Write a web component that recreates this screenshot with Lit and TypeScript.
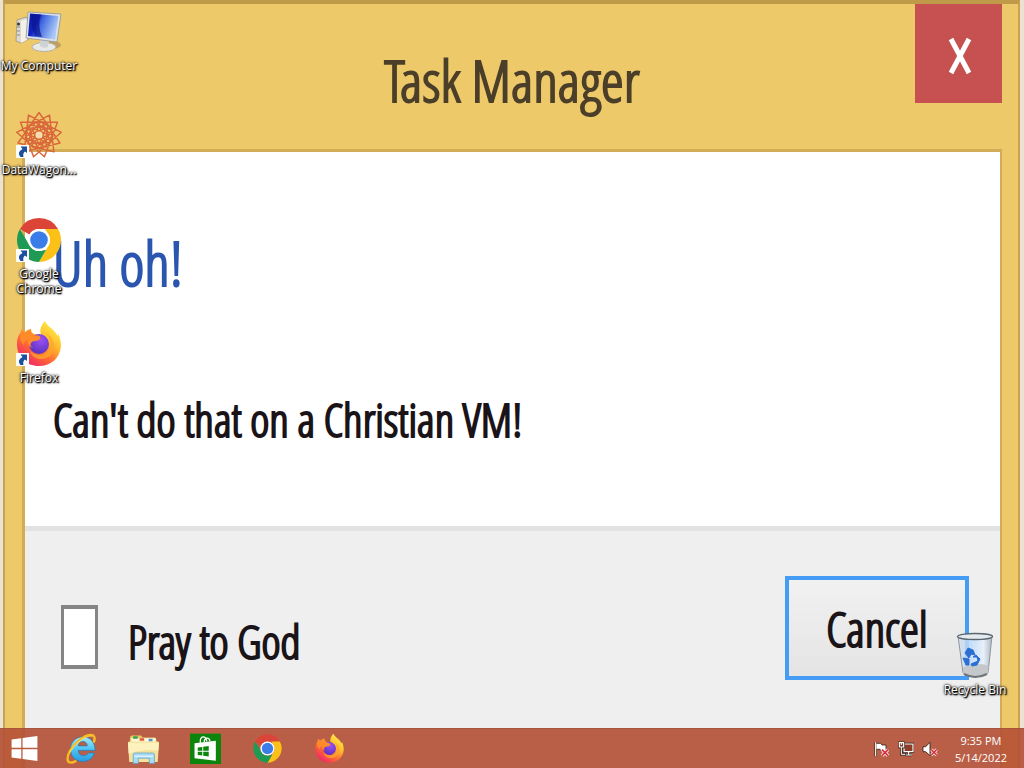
import { LitElement, html, svg, css } from "lit";
import { customElement, property } from "lit/decorators.js";

const starPoints = (n: number, step: number, r: number, turn = 0) =>
  Array.from({ length: n + 1 }, (_, i) => {
    const a = (i * step * 2 * Math.PI) / n - Math.PI / 2 + turn;
    return `${(24 + r * Math.cos(a)).toFixed(1)},${(23 + r * Math.sin(a)).toFixed(1)}`;
  }).join(" ");

const shapes: Record<string, unknown> = {
  computer: svg`
    <defs>
      <linearGradient id="scr" x1="0" y1="0" x2="1" y2="0.35">
        <stop offset="0" stop-color="#0a1a9c"/><stop offset="0.35" stop-color="#1224c4"/>
        <stop offset="0.5" stop-color="#3f66e0"/><stop offset="1" stop-color="#a9c8f6"/>
      </linearGradient>
    </defs>
    <path d="M2 12 L11 9 L14 13 V31 L6 35 L1 33 Z" fill="#dcdad2" stroke="#8f8c80" stroke-width="0.7"/>
    <path d="M6 13 L12 11 V32 L6 35 Z" fill="#f3f1ea"/>
    <path d="M2 19 H5 M2 23 H5 M2 27 H5" stroke="#8b8b80" stroke-width="1"/>
    <circle cx="3.5" cy="16" r="1.5" fill="#303a34"/>
    <ellipse cx="37" cy="37" rx="9" ry="4" fill="#8b7442" opacity="0.45"/>
    <ellipse cx="29" cy="39" rx="12" ry="4.5" fill="#e9e9e6" stroke="#a3a5a4" stroke-width="0.8"/>
    <path d="M25 31 L34 33 L33 39 Q29 41 25 38 Z" fill="#cfd3d6"/>
    <path d="M13 4 L46 6 L42 34 L11 30 Z" fill="#dde1e6" stroke="#8d949c" stroke-width="0.8"/>
    <path d="M15 5.500 L43.500 8 L40 31.500 L13 28 Z" fill="url(#scr)"/>
    <path d="M17 6 L26 6.500 Q22 16 27 29 L20 28 Q15 16 17 6Z" fill="#0a1590" opacity="0.7"/>`,
  wagon: svg`
    <g fill="none" stroke="#d9683c" stroke-linejoin="round">
      <polygon points=${starPoints(13, 4, 22.5)} stroke-width="1.5"/>
      <polygon points=${starPoints(13, 4, 14, 0.2)} stroke-width="1.4"/>
      <polygon points=${starPoints(8, 3, 10)} stroke-width="1.4"/>
    </g>
    <circle cx="24" cy="23" r="3.500" fill="#f6dcae"/>`,
  chrome: svg`
    <path d="M24 2 A22 22 0 0 1 43.050 13 H24 A11 11 0 0 0 14.500 18.500 L4.950 13 A22 22 0 0 1 24 2Z" fill="#dc4437"/>
    <path d="M43.050 13 A22 22 0 0 1 24 46 L33.500 29.500 A11 11 0 0 0 33.500 18.500 L30 13Z" fill="#fbc116"/>
    <path d="M24 46 A22 22 0 0 1 4.950 13 L14.500 29.500 A11 11 0 0 0 28 34.300 L31 34Z" fill="#1f9a55"/>
    <circle cx="24" cy="24" r="11" fill="#fff"/>
    <circle cx="24" cy="24" r="8.800" fill="#3b7de8"/>`,
  firefox: svg`
    <defs>
      <linearGradient id="ffb" x1="0.85" y1="0.05" x2="0.2" y2="0.95">
        <stop offset="0" stop-color="#fff04a"/><stop offset="0.35" stop-color="#ffbd2e"/>
        <stop offset="0.65" stop-color="#ff6a33"/><stop offset="1" stop-color="#f0246a"/>
      </linearGradient>
      <radialGradient id="ffg" cx="0.6" cy="0.3" r="0.8">
        <stop offset="0" stop-color="#9a4ff5"/><stop offset="1" stop-color="#5330b8"/>
      </radialGradient>
    </defs>
    <path d="M30 1 C32 6 37 8 40 12 C41 13 42 15 42.500 16 L43.500 14 C46 20 46 24 46 26 C45 39 35 46 24 46 C11 46 2 37 2 24 C2 18 4 14 6 12 L6 9 L10 12 C12 10 14 9 16 9 C16 11 17 13 19 14 L26 15 C24 9 27 4 30 1Z" fill="url(#ffb)"/>
    <circle cx="24" cy="24" r="10" fill="url(#ffg)"/>
    <path d="M6 12 L10 13 C12 11 14 10 16 9 C15 13 18 15 21 15.500 C25 15 26 17 25 19 C22 22 18 20 16 23 C15 25 16 27 18 28 C14 27 12 23 13 19 C11 20 9 22 9 25 C5 22 4 16 6 12Z" fill="#ff8a2a"/>
    <path d="M30 13 C36 17 37 26 33 31 C29 36 20 36 15 31 C17 40 30 42 37 34 C42 27 39 17 30 13Z" fill="#ffa52b" opacity="0.75"/>`,
  bin: svg`
    <defs>
      <linearGradient id="bing" x1="0" y1="0" x2="1" y2="0">
        <stop offset="0" stop-color="#d7dfe6" stop-opacity="0.8"/><stop offset="0.35" stop-color="#bdd9fb" stop-opacity="0.85"/>
        <stop offset="0.75" stop-color="#e6f0fb" stop-opacity="0.9"/><stop offset="1" stop-color="#aab4bc" stop-opacity="0.95"/>
      </linearGradient>
    </defs>
    <path d="M7 4 H41 L37 41 Q24 49 12 41 Z" fill="url(#bing)" stroke="#8c969e" stroke-width="1"/>
    <path d="M12 36 Q16 31 22 34 Q29 30 37.500 34 L37 41 Q24 49 12 41Z" fill="#c4c8cb"/>
    <path d="M13 42 Q24 48 36 42" fill="none" stroke="#6e757a" stroke-width="2"/>
    <ellipse cx="24" cy="4.500" rx="17.500" ry="3" fill="#e3eaf0" stroke="#5d676f" stroke-width="1.300"/>
    <path d="M14 21 L17 16 L22 18 L24 23 L20 22 L18 26Z M12 26 L18 27 L18 33 L15 33Z M20 32 L27 29 L26 25 L22 25 L25 23 L29 27 L26 33 L21 34Z" fill="#2b6fd2" stroke="#2b6fd2" stroke-width="1"/>`,
  start: svg`
    <path d="M4 10 L19 8 V23 H4Z M21 7.700 L44 4.500 V23 H21Z M4 25 H19 V40 L4 38Z M21 25 H44 V43.500 L21 40.300Z" fill="#fff"/>`,
  ie: svg`
    <defs>
      <linearGradient id="ieg" x1="0" y1="0" x2="0" y2="1">
        <stop offset="0" stop-color="#a4e8fc"/><stop offset="0.5" stop-color="#4fc4f2"/><stop offset="1" stop-color="#2a9be0"/>
      </linearGradient>
    </defs>
    <path d="M26 6 C38 6 45 14 45 27 H19 C19 32 22 35 27 35 C31 35 33 33 35 31 H44 C41 40 35 44 26 44 C14 44 7 36 7 25 C7 14 15 6 26 6Z M19 20 H33 C33 16 30 13 26 13 C22 13 19 16 19 20Z" fill="url(#ieg)" fill-rule="evenodd" stroke="#1b7ab8" stroke-width="1"/>
    <path d="M43 15 C46 7 44 2 37 3 C28 4 13 15 6 28 C1 37 1 45 7 46 C10 46 13 45 16 43" fill="none" stroke="#f6bd1d" stroke-width="3.600"/>
    <path d="M41 6 C36 1 16 13 6 30" fill="none" stroke="#ffe578" stroke-width="1.200"/>`,
  explorer: svg`
    <path d="M3 8 Q3 4 6 4 H20 L23 7 H42 L44 10 V19 H3Z" fill="#e6c76c"/>
    <path d="M5 8 H43 V14 H5Z" fill="#fff7d6"/>
    <path d="M8 5 H15 V9 H8Z" fill="#3aa54a"/><path d="M18 8 H25 V12 H18Z" fill="#e65a3b"/><path d="M32 9 H38 V13 H32Z" fill="#4a93d8"/>
    <path d="M0 15 Q0 13 2 13 H46 Q48 13 48 15 L46 45 H2Z" fill="#f5e29a"/>
    <path d="M0 15 H48 L47 27 Q24 24 1 32Z" fill="#fdf2bd"/>
    <path d="M8 47 V34 Q8 31 11 31 H38 Q41 31 41 34 V47 H33 V39 H16 V47Z" fill="#a9daf3" stroke="#5ea6cf" stroke-width="1.200"/>
    <path d="M10 36 H39" stroke="#e3f5fd" stroke-width="2"/>`,
  store: svg`
    <path d="M0 1 H48 V48 H0Z" fill="#0b850b"/>
    <path d="M7 16 L40 12 V43 L7 39Z" fill="#fff"/>
    <path d="M16 15 C15 4 25 3 26 13 M22 14 C22 7 30 5 31 13" fill="none" stroke="#fff" stroke-width="2"/>
    <path d="M12 22.500 L19 21.500 V27.500 H12Z M20.500 21.200 L29 20 V27.500 H20.500Z M12 29 H19 V35 L12 34Z M20.500 29 H29 V36.500 L20.500 35.300Z" fill="#0b850b"/>`,
  flag: svg`
    <path d="M5 4 V46" stroke="#2a1a12" stroke-width="7"/>
    <path d="M6 7 H20 L24 12 H36 V29 H22 L18 25 H6Z" fill="#fff" stroke="#3a2218" stroke-width="2.500"/>
    <path d="M5 4 V46" stroke="#fff" stroke-width="3.500"/>
    <path d="M24 26 L42 44 M42 26 L24 44" stroke="#fff" stroke-width="10"/>
    <path d="M24 26 L42 44 M42 26 L24 44" stroke="#d8303c" stroke-width="5.500"/>`,
  network: svg`
    <path d="M18 9 H45 V32 H18Z M22 42 H42 M32 32 V42" fill="none" stroke="#2a1a12" stroke-width="8"/>
    <path d="M18 9 H45 V32 H18Z" fill="#8c3c28" stroke="#fff" stroke-width="3.500"/>
    <path d="M22 42 H42 M32 32 V42" stroke="#fff" stroke-width="3.500"/>
    <path d="M4 5 H17 V18 H4Z M10 18 V40 H24" fill="none" stroke="#2a1a12" stroke-width="7"/>
    <path d="M4 5 H17 V18 H4Z" fill="#8c3c28" stroke="#fff" stroke-width="3.500"/>
    <path d="M10 5 V12 M10 18 V40 H22" fill="none" stroke="#fff" stroke-width="3"/>`,
  sound: svg`
    <path d="M3 17 H11 L24 4 V44 L11 32 H3Z" fill="#fff" stroke="#2a1a12" stroke-width="2.500"/>
    <path d="M28 26 L44 42 M44 26 L28 42" stroke="#fff" stroke-width="9"/>
    <path d="M28 26 L44 42 M44 26 L28 42" stroke="#d8303c" stroke-width="5"/>`,
};

const icon = (name: string, cls: string) =>
  html`<svg class=${cls} viewBox="0 0 48 48" aria-hidden="true">${shapes[name]}</svg>`;

@customElement("desktop-icon")
export class DesktopIcon extends LitElement {
  @property() icon = "";
  @property() label = "";
  @property({ type: Boolean }) shortcut = false;

  static styles = css`
    :host { display: block; height: 104px; width: 78px; }
    .item {
      display: flex; flex-direction: column; align-items: center; gap: 2px;
      width: 100%; padding: 8px 0 0; border: 0; background: none; color: #fff;
      font: 12px/15px "Open Sans", "Noto Sans", sans-serif; text-align: center;
    }
    .art { position: relative; display: block; width: 48px; height: 48px; }
    .glyph { display: block; width: 48px; height: 48px; }
    .badge { position: absolute; left: 1px; bottom: 2px; width: 13px; height: 13px; background: #fff; }
    .text {
      text-shadow: 0 0 2px #000, 1px 1px 2px #000, 1px 1px 1px #000, 0 0 3px rgba(0, 0, 0, 0.8);
    }
  `;

  render() {
    return html`<button class="item">
      <span class="art">
        ${icon(this.icon, "glyph")}
        ${this.shortcut
          ? html`<svg class="badge" viewBox="0 0 13 13" aria-hidden="true">
              <path d="M4.500 1.500 H11 V8 L9 6.500 Q6.500 8 7.500 12 H4.500 Q0.500 7 6.500 4Z" fill="#1c4f9c" />
            </svg>`
          : ""}
      </span>
      <span class="text">${this.label}</span>
    </button>`;
  }
}

@customElement("task-bar")
export class TaskBar extends LitElement {
  static styles = css`
    :host {
      display: flex; align-items: stretch; height: 40px; color: #fff;
      background: rgba(180, 79, 52, 0.9); border-top: 1px solid #a8553f; box-sizing: border-box;
      font: 12px/17px "Open Sans", "Noto Sans", sans-serif;
    }
    button {
      display: flex; align-items: center; justify-content: center;
      border: 0; padding: 0; background: none; color: inherit; font: inherit;
    }
    .start { width: 48px; margin-right: 2px; }
    .app { width: 62px; }
    .glyph { width: 31px; height: 31px; }
    .tray { display: flex; margin-left: auto; padding-right: 17px; }
    .small { width: 24px; }
    .mini { width: 16px; height: 16px; }
    .clock { display: block; margin-left: 13px; font-size: 11px; text-align: center; }
    .clock span { display: block; }
  `;

  render() {
    const apps = [
      ["ie", "Internet Explorer"], ["explorer", "File Explorer"], ["store", "Store"],
      ["chrome", "Google Chrome"], ["firefox", "Firefox"],
    ];
    const tray = [["flag", "Action Center"], ["network", "Network"], ["sound", "Volume"]];
    return html`
      <button class="start" aria-label="Start">${icon("start", "glyph")}</button>
      ${apps.map(([i, l]) => html`<button class="app" aria-label=${l}>${icon(i, "glyph")}</button>`)}
      <div class="tray">
        ${tray.map(([i, l]) => html`<button class="small" aria-label=${l}>${icon(i, "mini")}</button>`)}
        <button class="clock"><span>9:35 PM</span><span>5/14/2022</span></button>
      </div>
    `;
  }
}

@customElement("message-window")
export class MessageWindow extends LitElement {
  static styles = css`
    :host {
      display: flex; flex-direction: column; box-sizing: border-box; min-height: 100vh;
      margin: 0 4px 0 3px; padding: 0 16px 0 17px; background: #eec96a;
      border: solid #c9a355; border-width: 4px 2px 0; border-top-color: #bf9a48;
      font-family: "Open Sans Condensed Light", "Roboto Condensed", "Open Sans", sans-serif;
      color: #1a1418; -webkit-text-stroke: 2px currentColor; paint-order: stroke fill;
    }
    .head { display: grid; grid-template-columns: 1fr auto 1fr; height: 145px; }
    .title {
      grid-column: 2; align-self: center; margin: 0; padding-top: 6px;
      font-size: 58px; line-height: 64px; font-weight: 400; color: #4b3f2a;
    }
    .close {
      justify-self: end; box-sizing: border-box; width: 87px; height: 99px; padding: 5px 2px 0 4px; border: 0; background: #c75050;
      display: grid; place-items: center;
    }
    .cross { width: 24px; height: 38px; }
    .content {
      flex: 1; display: flex; flex-direction: column; background: #fff;
      border: solid #d4ac58; border-width: 3px 2px 0 3px;
    }
    .body { box-sizing: border-box; height: 374px; padding: 71px 28px 0; }
    .heading { margin: 0; font-size: 60px; line-height: 80px; font-weight: 400; color: #2a56b0; }
    .message { margin: 76px 0 0; font-size: 46px; line-height: 80px; }
    .foot {
      flex: 1; display: flex; justify-content: space-between; align-items: flex-start;
      padding: 45px 31px 0 36px; background: #efefef; border-top: 5px solid #e2e2e2;
    }
    .check { display: flex; align-items: center; gap: 30px; margin-top: 17px; font-size: 46px; line-height: 80px; }
    .caption { padding-top: 8px; }
    .box {
      appearance: none; box-sizing: border-box; margin: 0; width: 37px; height: 64px;
      background: #fff; border: solid #858585; border-width: 4px 3px;
    }
    .cancel {
      width: 184px; height: 104px; padding: 0; border: 4px solid #449cf4;
      background: linear-gradient(#f1f1f1, #e4e4e4); color: inherit; font: inherit; font-size: 48px;
      -webkit-text-stroke: inherit;
    }
  `;

  render() {
    return html`
      <header class="head">
        <h1 class="title">Task Manager</h1>
        <button class="close" aria-label="Close">
          <svg class="cross" viewBox="0 0 24 38" aria-hidden="true">
            <path d="M3 2 L21 36 M21 2 L3 36" stroke="#fff" stroke-width="5" />
          </svg>
        </button>
      </header>
      <div class="content">
        <div class="body">
          <h2 class="heading">Uh oh!</h2>
          <p class="message">Can't do that on a Christian VM!</p>
        </div>
        <div class="foot">
          <label class="check" for="pray">
            <input class="box" id="pray" type="checkbox" /><span class="caption">Pray to God</span>
          </label>
          <button class="cancel">Cancel</button>
        </div>
      </div>
    `;
  }
}

@customElement("app-root")
export class AppRoot extends LitElement {
  static styles = css`
    :host { display: block; position: relative; height: 100vh; overflow: hidden; background: #ece2d2; }
    .layer { position: absolute; inset: 0; display: flex; flex-direction: column; pointer-events: none; }
    .icons { flex: 1; display: flex; justify-content: space-between; padding-right: 10px; }
    .last { align-self: flex-end; }
    .layer desktop-icon, .layer task-bar { pointer-events: auto; }
  `;

  render() {
    return html`
      <message-window></message-window>
      <div class="layer">
        <div class="icons">
          <nav>
            <desktop-icon icon="computer" label="My Computer"></desktop-icon>
            <desktop-icon icon="wagon" label="DataWagon..." shortcut></desktop-icon>
            <desktop-icon icon="chrome" label="Google Chrome" shortcut></desktop-icon>
            <desktop-icon icon="firefox" label="Firefox" shortcut></desktop-icon>
          </nav>
          <desktop-icon class="last" icon="bin" label="Recycle Bin"></desktop-icon>
        </div>
        <task-bar></task-bar>
      </div>
    `;
  }
}
